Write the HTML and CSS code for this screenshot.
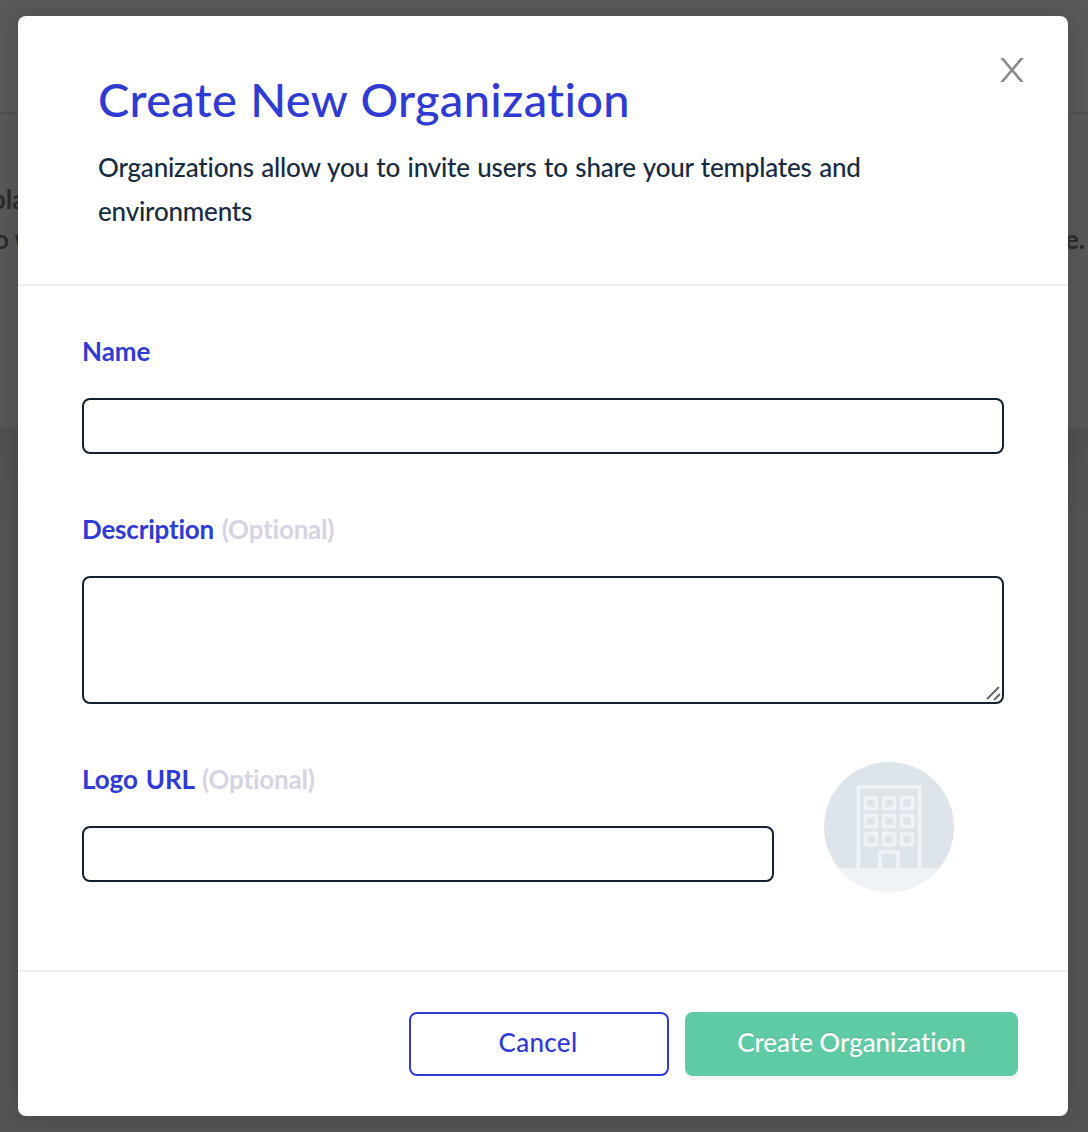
FILE: index.html
```html
<!doctype html>
<html>
<head>
<meta charset="utf-8">
<title>Create New Organization</title>
<link rel="stylesheet" href="styles.css">
</head>

<body>
<div class="page">
	<div class="page-top"></div>
	<div class="page-main">
		<div class="page-line"><span class="cut-left">pla</span></div>
		<div class="page-line"><span class="cut-left second">o w</span><span>e.</span></div>
	</div>
</div>

<div class="modal">
	<div class="modal-header">
		<h1>Create New Organization</h1>
		<p>Organizations allow you to invite users to share your templates and<br>environments</p>
		<button class="close" aria-label="Close">
			<svg width="24" height="24" viewBox="0 0 24 24"><path d="M1-1 23 25M23-1 1 25"/></svg>
		</button>
	</div>

	<form class="modal-body">
		<div class="field">
			<label for="name" class="name">Name</label>
			<input type="text" id="name">
		</div>
		<div class="field">
			<label for="description">Description <span class="optional">(Optional)</span></label>
			<div class="area">
				<textarea id="description"></textarea>
				<svg class="grip" width="16" height="16" viewBox="0 0 16 16"><path d="M1 13 13 1M8 14l6-6"/></svg>
			</div>
		</div>
		<div class="logo-row">
			<div class="field logo-field">
				<label for="logo" class="logo-label">Logo URL <span class="optional">(Optional)</span></label>
				<input type="text" id="logo">
			</div>
			<svg class="logo" width="130" height="130" viewBox="0 0 130 130">
				<defs>
					<clipPath id="round"><circle cx="65" cy="65" r="65"/></clipPath>
					<rect id="win" width="11" height="11" rx="1"/>
				</defs>
				<g clip-path="url(#round)">
					<rect width="130" height="130" fill="#dde4ea"/>
					<rect y="106" width="130" height="24" fill="#eff3f6"/>
				</g>
				<g fill="none" stroke="#eff3f6" stroke-width="3.7" stroke-linejoin="round">
					<path d="M34.3 107V25h61.4v82"/>
					<path d="M56 107V90h18v17"/>
					<use href="#win" x="41.5" y="35.7"/><use href="#win" x="59.5" y="35.7"/><use href="#win" x="77.5" y="35.7"/>
					<use href="#win" x="41.5" y="53.7"/><use href="#win" x="59.5" y="53.7"/><use href="#win" x="77.5" y="53.7"/>
					<use href="#win" x="41.5" y="71.7"/><use href="#win" x="59.5" y="71.7"/><use href="#win" x="77.5" y="71.7"/>
				</g>
			</svg>
		</div>
	</form>

	<div class="modal-footer">
		<button class="btn cancel">Cancel</button>
		<button class="btn create">Create Organization</button>
	</div>
</div>
</body>
</html>
```
FILE: styles.css
```css
*{ margin:0; padding:0; box-sizing:border-box;}
body{ width:1088px; height:1132px; overflow:hidden; background:#525554; font-family:Lato, "Liberation Sans", sans-serif; font-weight:500; font-size:26px; color:#172b42; font-variant-ligatures:none;}

/* dimmed page under the modal */
.page{ position:absolute; left:0; top:0; width:1088px; height:1132px; overflow:hidden; background:linear-gradient(#4f5052 428px, #525554 520px);}
.page-top{ height:114px; background:#595959; border-bottom:2px solid #505056;}
.page-main{ height:314px; padding-top:65px; background:#585858; color:#2b2b2b; font-weight:700;}
.page-line{ display:flex; justify-content:space-between; height:40px; line-height:40px; padding-right:3px;}
.cut-left{ margin-left:-9px;}
.second{ margin-left:-6px;}

.modal{ position:relative; width:1050px; height:1100px; margin:16px 0 0 18px; background:#fff; border-radius:8px; box-shadow:0 2px 24px rgba(0,0,0,.16); display:flex; flex-direction:column;}
.modal-header{ position:relative; height:270px; padding:54px 80px 0; border-bottom:2px solid #efefef;}
h1{ font-size:47px; line-height:58px; font-weight:500; color:#2f3bd3; letter-spacing:.3px; word-spacing:1px; white-space:nowrap;}
p{ margin-top:17px; line-height:44px; letter-spacing:-.2px; word-spacing:1.1px; white-space:nowrap;}
.close{ position:absolute; left:982px; top:42px; width:24px; height:24px; border:0; background:none;}
.close svg{ display:block; fill:none; stroke:#8a8a8a; stroke-width:2.6;}

.modal-body{ flex:1; padding:43px 64px 0;}
.field{ display:flex; flex-direction:column; margin-bottom:54px;}
label{ height:44px; line-height:44px; margin-bottom:25px; font-weight:700; color:#2f3bd3; letter-spacing:-.2px; word-spacing:1.5px; white-space:nowrap;}
.field + .field, .logo-row{ margin-top:-1px;}
.name, .logo-label{ letter-spacing:-.05px;}
.optional{ color:#d6d4e3; letter-spacing:-.2px;}
input, textarea{ display:block; width:100%; height:56px; padding:0 14px; border:2px solid #14202f; border-radius:8px; background:#fff; font:inherit; outline:none;}
.area{ position:relative;}
textarea{ height:128px; resize:none;}
.grip{ position:absolute; right:2px; bottom:2px; fill:none; stroke:#666; stroke-width:2;}
.logo-row{ display:flex; gap:50px;}
.logo-field{ width:692px;}
.logo{ margin-top:5px;}

.modal-footer{ display:flex; justify-content:flex-end; gap:16px; height:146px; padding:40px 50px 0; border-top:2px solid #efefef;}
.btn{ height:64px; padding-bottom:4px; border-radius:8px; font:inherit; white-space:nowrap;}
.cancel{ width:260px; padding-right:2px; border:2px solid #2f3bd3; background:#fff; color:#2f3bd3; letter-spacing:.3px; box-shadow:0 4px 0 #fdfdfd;}
.create{ width:333px; border:0; background:#5ecba5; color:#fff; letter-spacing:-.05px; text-shadow:0 -1px 0 rgba(0,0,0,.12); box-shadow:0 4px 0 #f4f4f4;}
```
